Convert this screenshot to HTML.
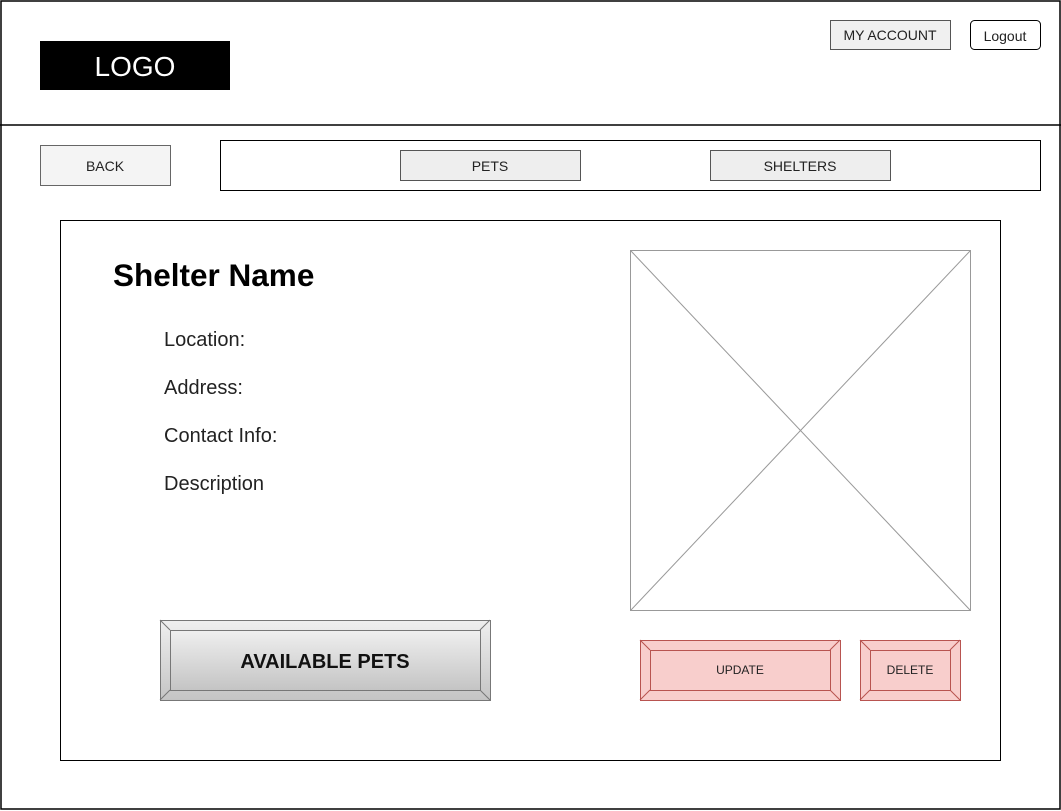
<!DOCTYPE html>
<html><head><meta charset="utf-8"><style>
body{margin:0;width:1061px;height:811px;overflow:hidden;background:#fff;font-family:"Liberation Sans",sans-serif}
svg{position:absolute;left:0;top:0}
</style></head><body>
<svg width="1061" height="811" viewBox="0 0 1061 811" font-family="Liberation Sans, sans-serif">
<defs><linearGradient id="g" x1="0" y1="0" x2="0" y2="1"><stop offset="0" stop-color="#efefef"/><stop offset="1" stop-color="#c4c4c4"/></linearGradient></defs>
<rect x="1" y="1" width="1059" height="808" fill="#fff" stroke="#000" stroke-width="1.5"/>
<line x1="0" y1="125" x2="1061" y2="125" stroke="#000" stroke-width="1.5"/>
<rect x="40" y="41" width="190" height="49" fill="#000"/>
<text x="135" y="76" fill="#fff" font-size="28" text-anchor="middle">LOGO</text>
<rect x="830.5" y="20.5" width="120" height="29" fill="#f0f0f0" stroke="#555"/>
<text x="890" y="40" font-size="14" text-anchor="middle" fill="#222">MY ACCOUNT</text>
<rect x="970.5" y="20.5" width="70" height="29" rx="4" fill="#fff" stroke="#000"/>
<text x="1005" y="41" font-size="14" text-anchor="middle" fill="#222">Logout</text>
<rect x="40.5" y="145.5" width="130" height="40" fill="#f4f4f4" stroke="#666"/>
<text x="105" y="171" font-size="14" text-anchor="middle" fill="#222">BACK</text>
<rect x="220.5" y="140.5" width="820" height="50" fill="#fff" stroke="#000"/>
<rect x="400.5" y="150.5" width="180" height="30" fill="#eee" stroke="#555"/>
<text x="490" y="171" font-size="14" text-anchor="middle" fill="#222">PETS</text>
<rect x="710.5" y="150.5" width="180" height="30" fill="#eee" stroke="#555"/>
<text x="800" y="171" font-size="14" text-anchor="middle" fill="#222">SHELTERS</text>
<rect x="60.5" y="220.5" width="940" height="540" fill="#fff" stroke="#000"/>
<text x="113" y="286" font-size="31.5" font-weight="bold">Shelter Name</text>
<g font-size="20" fill="#222"><text x="164" y="346">Location:</text><text x="164" y="394">Address:</text><text x="164" y="442">Contact Info:</text><text x="164" y="490">Description</text></g>
<rect x="630.5" y="250.5" width="340" height="360" fill="#fff" stroke="#999"/>
<line x1="631" y1="251" x2="970" y2="610" stroke="#999"/><line x1="970" y1="251" x2="631" y2="610" stroke="#999"/>
<g stroke="#777"><rect x="160.5" y="620.5" width="330" height="80" fill="url(#g)"/>
<rect x="170.5" y="630.5" width="310" height="60" fill="url(#g)"/>
<path d="M160 620L170 630M490 620L480 630M160 700L170 690M490 700L480 690" fill="none"/></g>
<text x="325" y="668" font-size="20" font-weight="bold" text-anchor="middle" fill="#111">AVAILABLE PETS</text>
<g stroke="#b85450" fill="#f8cecc"><rect x="640.5" y="640.5" width="200" height="60"/><rect x="650.5" y="650.5" width="180" height="40"/>
<path d="M640 640L650 650M840 640L830 650M640 700L650 690M840 700L830 690" fill="none"/>
<rect x="860.5" y="640.5" width="100" height="60"/><rect x="870.5" y="650.5" width="80" height="40"/>
<path d="M860 640L870 650M960 640L950 650M860 700L870 690M960 700L950 690" fill="none"/></g>
<text x="740" y="674" font-size="12" text-anchor="middle" fill="#222">UPDATE</text>
<text x="910" y="674" font-size="12" text-anchor="middle" fill="#222">DELETE</text>
</svg>
</body></html>
